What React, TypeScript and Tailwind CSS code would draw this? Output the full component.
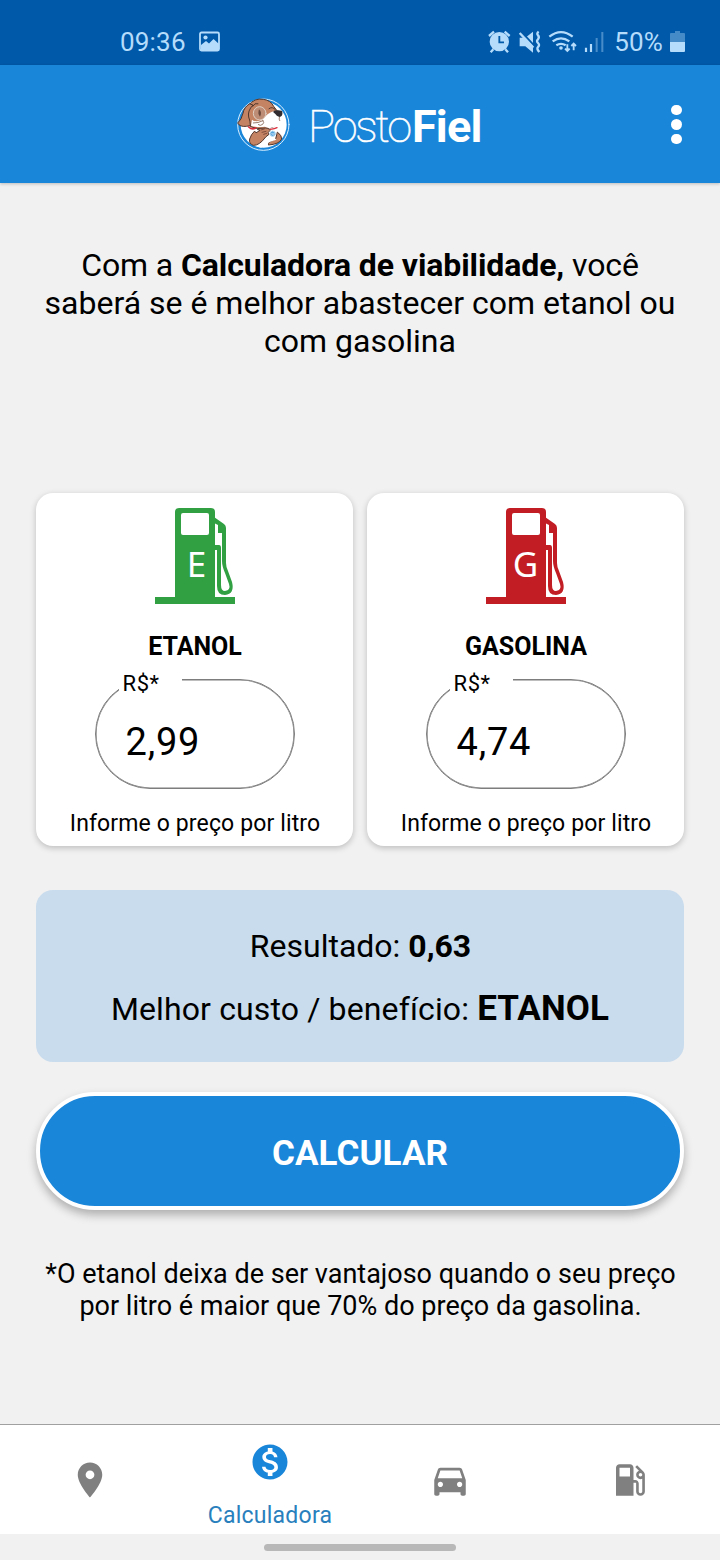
import type { ReactNode } from "react";
import { MdDirectionsCar, MdLocalGasStation, MdMonetizationOn, MdPlace } from "react-icons/md";

function StatusBar() {
  return (
    <div className="flex h-[65px] items-center bg-[#0059a9] pt-[18px] pr-[35px] pl-[120px] text-[26px] text-[#b5dcfb]">
      <span className="mt-[2px] tracking-[0.2px]">09:36</span>
      <svg className="ml-[12px] h-[21px] w-[23px]" viewBox="0 0 23 21" fill="none">
        <rect x="2" y="1.500" width="19" height="18" rx="1.5" stroke="currentColor" strokeWidth="1.800" />
        <path d="M3 14l5-4 3 2.500L15.500 8l5.500 5v6H3z" fill="currentColor" />
        <circle cx="7.500" cy="6.500" r="2.100" fill="currentColor" />
      </svg>
      <div className="ml-auto flex items-center">
        <svg className="h-[34px] w-[124px]" viewBox="0 0 372 102" fill="none" stroke="currentColor">
          <circle cx="46" cy="50" r="29" fill="currentColor" stroke="none" />
          <path d="M15 33l15-13M77 33L62 20M28 73l-8 9M64 73l8 9" strokeWidth="7" />
          <path d="M46 33v19h14" stroke="#0059a9" strokeWidth="5.500" />
          <path d="M107 38h17l23-18v63l-23-19h-17z" fill="currentColor" stroke="none" />
          <path d="M111 19l43 47" stroke="#0059a9" strokeWidth="6" />
          <path d="M107 24l41 44" strokeWidth="7" />
          <path d="M164 20q-7 5-2 11t0 12q-6 5 0 11t0 12q-5 5 4 15" strokeWidth="7" />
          <path d="M196 35q35-27 70 0M206 49q25-18 50 0M217 61q14-9 28 0" strokeWidth="7" />
          <circle cx="231" cy="69" r="5.500" fill="currentColor" stroke="none" />
          <path d="M250 58v20M243 71l7 7 7-7M269 76V56M262 63l7-7 7 7" strokeWidth="5.500" />
          <path d="M306 81V68M321 81V57" strokeWidth="6.500" />
          <path d="M338 81V39M355 81V21" strokeWidth="6" opacity=".4" />
        </svg>
        <span className="mt-[2px] ml-[6px] tracking-[0.2px]">50%</span>
        <svg className="ml-[7px] h-[22px] w-[15px]" viewBox="0 0 15 22" fill="currentColor">
          <path d="M5 0h5v2h4q1 0 1 1v8H0V3q0-1 1-1h4z" opacity=".38" />
          <path d="M0 11h15v9q0 1-1 1H1q-1 0-1-1z" />
        </svg>
      </div>
    </div>
  );
}

function DogLogo() {
  return (
    <svg className="h-[60px] w-[60px] shrink-0" viewBox="0 0 180 180" fill="none" strokeLinecap="round" strokeLinejoin="round">
      <circle cx="91" cy="92" r="77" stroke="#d9f0ff" strokeWidth="3" />
      <circle cx="92" cy="92" r="69" fill="#fff" />
      <path d="M52 106Q76 121 101 107L119 128L106 151L84 161Q60 157 47 135Z" fill="#fff" />
      <path d="M64 112Q54 121 50 135Q47 149 61 154Q79 155 98 129L108 121Q102 116 111 109Q108 101 93 99Q82 97 73 106L81 109L70 116Z" fill="#c48464" stroke="#51362c" strokeWidth="3" />
      <path d="M134 115Q147 124 146 135Q138 151 106 153Q102 147 111 143L127 135Z" fill="#c48464" stroke="#51362c" strokeWidth="3" />
      <path d="M85 153L107 127Q120 127 130 137L112 143Q103 146 105 152L87 160Z" fill="#fff" />
      <path d="M47 33Q65 11 91 16Q113 19 122 37L132 50L137 69L133 88Q121 105 98 102Q73 107 52 98L43 67Z" fill="#c48464" stroke="#51362c" strokeWidth="3" />
      <path d="M49 30Q33 39 30 58Q26 77 14 87Q20 99 40 97L52 95Q52 81 47 69Q43 51 59 34Z" fill="#c48464" stroke="#51362c" strokeWidth="3" />
      <path d="M57 77Q67 86 86 78Q106 56 122 52Q137 59 143 69Q145 85 132 97L109 103L95 98Q72 101 54 95Z" fill="#fff" />
      <ellipse cx="80" cy="58" rx="19" ry="20" fill="#bd8d75" stroke="#dfd0c4" strokeWidth="3" />
      <path d="M78 46Q88 55 81 68Q73 60 78 46" fill="#69473b" />
      <path d="M59 37Q65 25 75 29M108 44Q118 36 127 47" stroke="#51362c" strokeWidth="3" />
      <path d="M121 55Q120 49 132 49Q148 48 148 54Q150 67 139 69Q130 66 127 60Z" fill="#302c30" />
      <path d="M61 87Q75 88 90 80M90 80Q95 86 89 91Q82 97 76 92M139 70Q137 76 140 80" stroke="#82604f" strokeWidth="2.500" />
      <path d="M47 99Q57 109 68 102" stroke="#d92f3c" strokeWidth="5" />
      <path d="M112 106Q126 104 132 101" stroke="#d92f3c" strokeWidth="4" />
      <path d="M84 108l10-3M87 115l12-3M92 121l9-3" stroke="#704034" strokeWidth="2.500" />
      <circle cx="119" cy="119" r="8" fill="#4b9edb" stroke="#b7ddf3" strokeWidth="3" />
      <path d="M115 118h8M117 122h5" stroke="#fff" strokeWidth="1.500" />
    </svg>
  );
}

function Header() {
  return (
    <header className="z-10 flex h-[118px] items-center bg-[#1a86da] pr-[32px] pl-[233px] text-white shadow-[0_1px_3px_rgba(0,0,0,0.22)]">
      <DogLogo />
      <h1 className="mt-[5px] ml-[15px] flex items-center text-[45px] leading-[54px]">
        <span className="font-thin tracking-[-2.1px] [-webkit-text-stroke:0.6px_white]">Posto</span>
        <span className="ml-[2px] font-bold tracking-[-0.8px]">Fiel</span>
      </h1>
      <button aria-label="Menu" className="mt-px ml-auto flex w-[23px] flex-col items-center gap-[4px]">
        <span className="size-[10.500px] rounded-full bg-white" />
        <span className="size-[10.500px] rounded-full bg-white" />
        <span className="size-[10.500px] rounded-full bg-white" />
      </button>
    </header>
  );
}

function FuelPump({ letter }: { letter: string }) {
  return (
    <svg className="h-[96px] w-[80px]" viewBox="0 0 80 96" fill="currentColor">
      <path fillRule="evenodd" d="M24 0h32q4 0 4 4v85h20v7H0v-7h20V4q0-4 4-4zm4 5q-2 0-2 2v18q0 2 2 2h24q2 0 2-2V7q0-2-2-2z" />
      <path d="M59 9l10 7q2 1.500 2 4v35q0 4 2 8l4 11q3 12-7 13-8 0-8-9V42h-3v-5h5q2 0 2 3v37q0 6 4 6 6-1 4-7l-4-11q-3-7-3-12V25h-4v-8l-4-2z" />
      <text x={letter === "E" ? 41.5 : 39.5} y="69" textAnchor="middle" fill="#fff" className="font-['Noto_Sans',sans-serif] text-[35px]">{letter}</text>
    </svg>
  );
}

function FuelCard({ letter, name, price, color }: { letter: string; name: string; price: string; color: string }) {
  return (
    <section className="flex h-[353px] flex-1 flex-col items-center rounded-[17px] bg-white pt-[15px] shadow-[0_2px_6px_rgba(0,0,0,0.22)]">
      <div className={color}><FuelPump letter={letter} /></div>
      <h2 className="mt-[28px] pl-px text-[25px] leading-[30px] font-bold">{name}</h2>
      <label className="relative mt-[17px] flex h-[110px] w-[200px] items-center rounded-full border border-[#7d7d7d] pt-[15px] pl-[30px] shadow-[inset_0_0_0_0.600px_#7d7d7d]">
        <span className="absolute top-[-10px] left-[23px] h-[27px] w-[63px] bg-white pl-[4px] text-[22px] leading-[28px] tracking-[0.6px]">R$*</span>
        <span className="text-[38px] leading-[44px] tracking-[0.8px]">{price}</span>
      </label>
      <p className="mt-[21px] pl-px text-[23px] leading-[28px] tracking-[0.13px]">Informe o preço por litro</p>
    </section>
  );
}

function NavItem({ label, children }: { label?: string; children: ReactNode }) {
  return (
    <button className={label ? "flex flex-1 flex-col items-center justify-start pt-[16px] text-[#1a86da]" : "flex flex-1 flex-col items-center justify-center text-[#808080]"}>
      {children}
      {label && <span className="mt-[19px] text-[23px] leading-[28px] tracking-[0.25px] text-[#2980bd]">{label}</span>}
    </button>
  );
}

export default function App() {
  return (
    <div className="flex h-[1560px] w-[720px] flex-col overflow-hidden bg-[#f1f1f1] font-[Roboto,sans-serif] text-black">
      <StatusBar />
      <Header />
      <main className="flex flex-1 flex-col px-[36px] pt-[63px]">
        <p className="text-center text-[32px] leading-[38px] whitespace-nowrap">
          <span className="tracking-[-0.1px]">Com a <b>Calculadora de viabilidade,</b> você</span><br />
          saberá se é melhor abastecer com etanol ou<br />
          com gasolina
        </p>
        <div className="mt-[133px] flex gap-[14px]">
          <FuelCard letter="E" name="ETANOL" price="2,99" color="text-[#30a043]" />
          <FuelCard letter="G" name="GASOLINA" price="4,74" color="text-[#c21d24]" />
        </div>
        <section className="mt-[44px] flex h-[172px] flex-col items-center rounded-[17px] bg-[#c8dced] pt-[36px]">
          <p className="pl-px text-[32px] leading-[40px]">Resultado: <b>0,63</b></p>
          <p className="mt-[23px] text-[32px] leading-[40px] tracking-[0.13px]">Melhor custo / benefício: <b className="text-[35px]">ETANOL</b></p>
        </section>
        <button className="mt-[30px] h-[118px] rounded-full border-4 border-white bg-[#1a86da] pt-[6px] text-[35px] font-bold tracking-[0.1px] text-white shadow-[0_5px_10px_rgba(0,0,0,0.28)]">CALCULAR</button>
        <p className="mt-[48px] pl-px text-center text-[27px] leading-[32px] whitespace-nowrap">
          *O etanol deixa de ser vantajoso quando o seu preço<br />
          por litro é maior que 70% do preço da gasolina.
        </p>
      </main>
      <nav className="flex h-[110px] border-t border-[#a0a0a0] bg-white">
        <NavItem><MdPlace size={42} /></NavItem>
        <NavItem label="Calculadora"><MdMonetizationOn size={42} /></NavItem>
        <NavItem><MdDirectionsCar size={42} /></NavItem>
        <NavItem><MdLocalGasStation size={42} /></NavItem>
      </nav>
      <footer className="flex h-[26px] items-center justify-center">
        <div className="h-[7px] w-[192px] rounded-full bg-[#b8b8b8]" />
      </footer>
    </div>
  );
}
